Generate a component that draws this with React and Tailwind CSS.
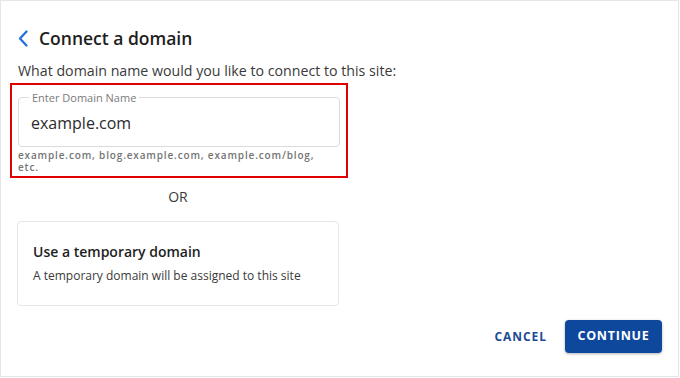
export default function App() {
  return (
    <div className="w-[680px] h-[378px] bg-white" style={{ fontFamily: '"Open Sans", "Noto Sans", sans-serif' }}>
      <div className="w-[679px] h-[377px] border border-[#e6e6e6] flex flex-col px-4">
        <div className="flex items-center gap-[11px] mt-[25px] ml-[1px]">
          <svg width="10" height="17" viewBox="0 0 10 17" className="text-[#1e6fd9]">
            <path d="M8.5 1.5 L2 8.5 L8.5 15.5" fill="none" stroke="currentColor" strokeWidth="2.2" strokeLinecap="round" strokeLinejoin="round" />
          </svg>
          <h1 className="text-[17.5px] font-semibold text-[#1e1e1e] leading-6">Connect a domain</h1>
        </div>

        <p className="mt-[11px] text-[14.2px] text-[#3a3a3a] leading-5 ml-[1px]">What domain name would you like to connect to this site:</p>

        <div className="mt-[2px] -ml-[7px] w-[338px] h-[95px] border-2 border-[#e00000] px-[6px] pt-[12px]">
          <div className="relative border border-[#dcdcdc] rounded-[4px] h-[50px] px-3 flex items-center">
            <span className="absolute -top-[8px] left-[10px] bg-white px-[3px] text-[11px] text-[#7a7a7a] leading-4">Enter Domain Name</span>
            <div className="text-[16px] text-[#2b2b2b] leading-5 pt-[2px]">example.com</div>
          </div>
          <p className="mt-[2px] w-[306px] text-[10px] font-semibold tracking-[0.085em] text-[#757575] leading-3">
            example.com, blog.example.com, example.com/blog, etc.
          </p>
        </div>

        <div className="w-[322px] text-center mt-[9px] text-[14px] text-[#3a3a3a] leading-5">OR</div>

        <div className="mt-[14px] w-[322px] h-[85px] border border-[#e6e6e6] rounded-[4px] px-[15px] pt-[20px]">
          <div className="text-[14px] font-semibold text-[#1e1e1e] leading-5">Use a temporary domain</div>
          <div className="mt-[6px] text-[12px] text-[#3a3a3a] leading-4">A temporary domain will be assigned to this site</div>
        </div>

        <div className="flex justify-end items-center gap-[18px] mt-[14px]">
          <button className="text-[12px] font-bold tracking-[0.08em] text-[#1d4a94] px-0">CANCEL</button>
          <button className="w-[97px] h-[33px] rounded-[4px] bg-[#0e489c] text-white text-[12.5px] font-bold tracking-[0.06em] shadow-[0_1px_3px_rgba(0,0,0,0.3)]">CONTINUE</button>
        </div>
      </div>
    </div>
  );
}
